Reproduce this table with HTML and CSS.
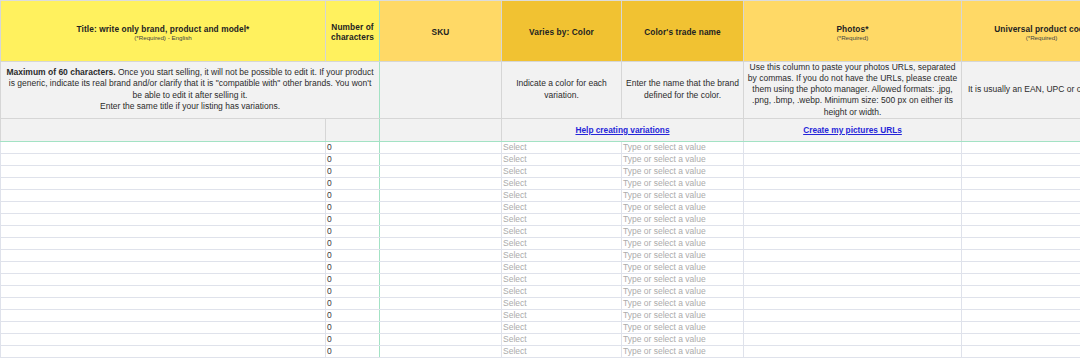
FILE: index.html
```html
<!DOCTYPE html>
<html lang="en">
<head>
  <meta charset="UTF-8">
  <meta content="width=device-width, initial-scale=1.0" name="viewport">
  <title>Listing template</title>
  <link rel="stylesheet" href="styles.css">
</head>
<body>
<div class="sheet">
  <table class="grid">
    <colgroup>
      <col class="w-title">
      <col class="w-count">
      <col class="w-sku">
      <col class="w-color">
      <col class="w-trade">
      <col class="w-photos">
      <col class="w-upc">
    </colgroup>

    <!-- column titles -->
    <tr class="head-row">
      <th class="head yellow">
        <div class="head-title">Title: write only brand, product and model*</div>
        <div class="head-sub">(*Required) - English</div>
      </th>
      <th class="head yellow freeze">
        <div class="head-title">Number of<br>characters</div>
      </th>
      <th class="head gold-light">
        <div class="head-title">SKU</div>
      </th>
      <th class="head gold">
        <div class="head-title">Varies by: Color</div>
      </th>
      <th class="head gold">
        <div class="head-title">Color's trade name</div>
      </th>
      <th class="head gold-light">
        <div class="head-title">Photos*</div>
        <div class="head-sub">(*Required)</div>
      </th>
      <th class="head gold-light">
        <div class="head-title">Universal product code</div>
        <div class="head-sub">(*Required)</div>
      </th>
    </tr>

    <!-- hints -->
    <tr class="desc-row">
      <td class="desc freeze" colspan="2"><b>Maximum of 60 characters.</b> Once you start selling, it will not be possible to edit it. If your product<br>is generic, indicate its real brand and/or clarify that it is "compatible with" other brands. You won't<br>be able to edit it after selling it.<br>Enter the same title if your listing has variations.</td>
      <td class="desc"></td>
      <td class="desc">Indicate a color for each<br>variation.</td>
      <td class="desc">Enter the name that the brand<br>defined for the color.</td>
      <td class="desc">Use this column to paste your photos URLs, separated<br>by commas. If you do not have the URLs, please create<br>them using the photo manager. Allowed formats: .jpg,<br>.png, .bmp, .webp. Minimum size: 500 px on either its<br>height or width.</td>
      <td class="desc desc-left">It is usually an EAN, UPC or other number of 8 to 14 digits.</td>
    </tr>

    <!-- links -->
    <tr class="help-row">
      <td class="help"></td>
      <td class="help freeze"></td>
      <td class="help"></td>
      <td class="help" colspan="2"><a href="#">Help creating variations</a></td>
      <td class="help"><a href="#">Create my pictures URLs</a></td>
      <td class="help"></td>
    </tr>

    <!-- data rows -->
    <tr class="data-row"><td></td><td class="count freeze">0</td><td></td><td class="hint">Select</td><td class="hint">Type or select a value</td><td></td><td></td></tr>
    <tr class="data-row"><td></td><td class="count freeze">0</td><td></td><td class="hint">Select</td><td class="hint">Type or select a value</td><td></td><td></td></tr>
    <tr class="data-row"><td></td><td class="count freeze">0</td><td></td><td class="hint">Select</td><td class="hint">Type or select a value</td><td></td><td></td></tr>
    <tr class="data-row"><td></td><td class="count freeze">0</td><td></td><td class="hint">Select</td><td class="hint">Type or select a value</td><td></td><td></td></tr>
    <tr class="data-row"><td></td><td class="count freeze">0</td><td></td><td class="hint">Select</td><td class="hint">Type or select a value</td><td></td><td></td></tr>
    <tr class="data-row"><td></td><td class="count freeze">0</td><td></td><td class="hint">Select</td><td class="hint">Type or select a value</td><td></td><td></td></tr>
    <tr class="data-row"><td></td><td class="count freeze">0</td><td></td><td class="hint">Select</td><td class="hint">Type or select a value</td><td></td><td></td></tr>
    <tr class="data-row"><td></td><td class="count freeze">0</td><td></td><td class="hint">Select</td><td class="hint">Type or select a value</td><td></td><td></td></tr>
    <tr class="data-row"><td></td><td class="count freeze">0</td><td></td><td class="hint">Select</td><td class="hint">Type or select a value</td><td></td><td></td></tr>
    <tr class="data-row"><td></td><td class="count freeze">0</td><td></td><td class="hint">Select</td><td class="hint">Type or select a value</td><td></td><td></td></tr>
    <tr class="data-row"><td></td><td class="count freeze">0</td><td></td><td class="hint">Select</td><td class="hint">Type or select a value</td><td></td><td></td></tr>
    <tr class="data-row"><td></td><td class="count freeze">0</td><td></td><td class="hint">Select</td><td class="hint">Type or select a value</td><td></td><td></td></tr>
    <tr class="data-row"><td></td><td class="count freeze">0</td><td></td><td class="hint">Select</td><td class="hint">Type or select a value</td><td></td><td></td></tr>
    <tr class="data-row"><td></td><td class="count freeze">0</td><td></td><td class="hint">Select</td><td class="hint">Type or select a value</td><td></td><td></td></tr>
    <tr class="data-row"><td></td><td class="count freeze">0</td><td></td><td class="hint">Select</td><td class="hint">Type or select a value</td><td></td><td></td></tr>
    <tr class="data-row"><td></td><td class="count freeze">0</td><td></td><td class="hint">Select</td><td class="hint">Type or select a value</td><td></td><td></td></tr>
    <tr class="data-row"><td></td><td class="count freeze">0</td><td></td><td class="hint">Select</td><td class="hint">Type or select a value</td><td></td><td></td></tr>
    <tr class="data-row"><td></td><td class="count freeze">0</td><td></td><td class="hint">Select</td><td class="hint">Type or select a value</td><td></td><td></td></tr>
  </table>

  <!-- horizontal scroll strip -->
  <div class="scroll-strip">
    <div class="scroll-left"></div>
    <div class="scroll-thumb"></div>
    <div class="scroll-gap"></div>
    <div class="scroll-rest"></div>
  </div>
</div>
</body>
</html>
```
FILE: styles.css
```css
:root{
  --yellow: #fff15e;
  --gold-light: #ffd966;
  --gold: #f1c232;
  --hint-bg: #f2f2f2;
  --grid-line: #dfe2eb;
  --head-line: #d6d6d6;
  --freeze-line: #a3e2c4;
  --text-dark: #222222;
  --text-hint: #ababab;
  --link: #2626d9;
}

body{
  margin: 0;
  width: 1080px;
  height: 358px;
  overflow: hidden;
  background-color: #ffffff;
  font-family: 'Liberation Sans', Arial, sans-serif;
}

.sheet{
  width: 1080px;
  height: 358px;
  overflow: hidden;
  border-top: 1px solid #dcdcdc;
  box-sizing: border-box;
}

.grid{
  border-collapse: collapse;
  table-layout: fixed;
  width: 1121px;
}

.w-title{ width: 325px; }
.w-count{ width: 54px; }
.w-sku{ width: 122px; }
.w-color{ width: 120px; }
.w-trade{ width: 122px; }
.w-photos{ width: 218px; }
.w-upc{ width: 160px; }

td, th{
  padding: 0 2px;
  border: 1px solid var(--grid-line);
  overflow: hidden;
  white-space: nowrap;
}

/* column titles */
.head-row{
  height: 60px;
}

.head{
  border-color: var(--head-line);
  border-top: none;
  padding-top: 3px;
  text-align: center;
  vertical-align: middle;
  color: var(--text-dark);
}

.head-title{
  font-size: 8.3px;
  font-weight: 700;
  line-height: 10px;
  letter-spacing: 0.1px;
}

.head-sub{
  font-size: 6.2px;
  font-weight: 400;
  line-height: 7px;
  color: #444444;
}

.yellow{ background-color: var(--yellow); }
.gold-light{ background-color: var(--gold-light); }
.gold{ background-color: var(--gold); }

.gold-light + .gold,
.gold + .gold{
  border-left-color: var(--gold);
}

/* hints */
.desc-row{
  height: 54px;
}

.desc{
  background-color: var(--hint-bg);
  border-color: var(--head-line);
  font-size: 8.5px;
  line-height: 11.3px;
  color: #2b2b2b;
  text-align: center;
  vertical-align: middle;
}

.desc-left{
  text-align: left;
  padding-left: 6px;
}

/* links */
.help-row{
  height: 23px;
}

.help{
  background-color: var(--hint-bg);
  border-color: var(--head-line);
  border-bottom: 1px solid var(--freeze-line);
  text-align: center;
  vertical-align: middle;
  font-size: 8.3px;
}

.help a{
  color: var(--link);
  font-weight: 700;
  text-decoration: underline;
}

/* frozen column edge */
.freeze{
  border-right: 1px solid var(--freeze-line);
}

/* sample rows */
.data-row{
  height: 12px;
}

.data-row td{
  font-size: 8.5px;
  line-height: 10px;
  padding: 0 1px;
  vertical-align: middle;
}

.count{
  color: #3a3a3a;
}

.hint{
  color: var(--text-hint);
}

.scroll-strip{
  display: flex;
  height: 3px;
}

.scroll-left{
  width: 85px;
  background-color: #f1f1f3;
}

.scroll-thumb{
  width: 66px;
  background-color: #e6e7ee;
}

.scroll-gap{
  width: 62px;
  background-color: #ffffff;
}

.scroll-rest{
  flex: 1;
  background-color: #f1f1f3;
}
```
